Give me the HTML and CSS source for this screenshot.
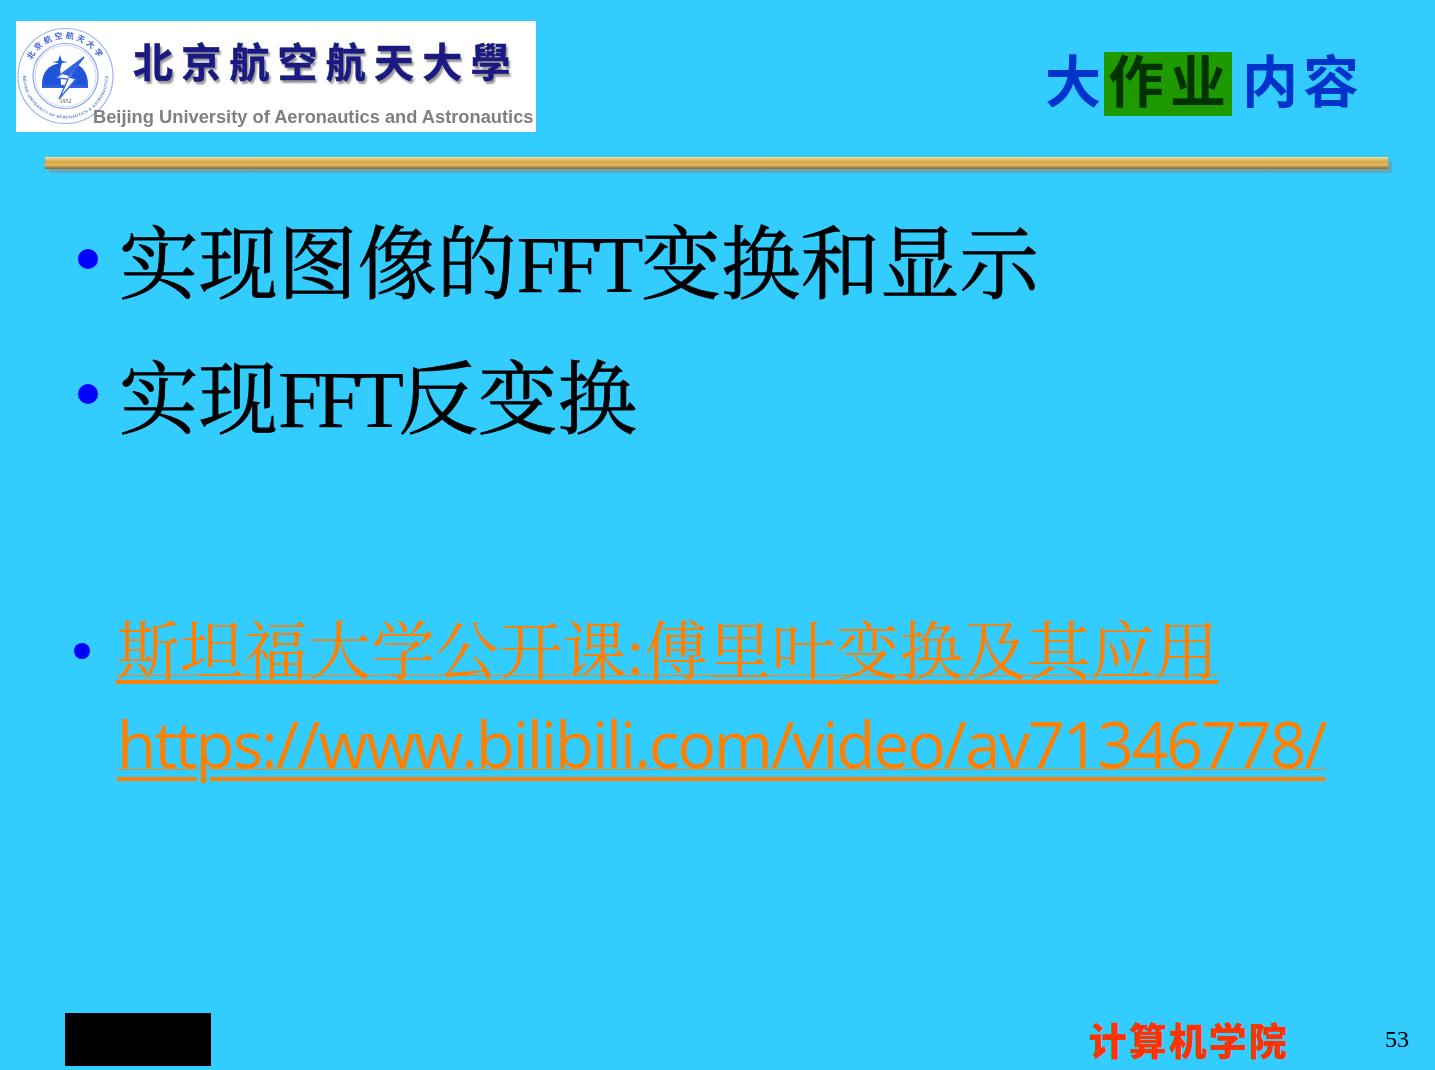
FILE: index.html
```html
<!DOCTYPE html>
<html lang="zh">
<head>
<meta charset="utf-8">
<title>大作业内容</title>
<link rel="stylesheet" href="styles.css">
</head>
<body>
<main class="slide">
  <header class="top">
    <div class="logo">
      <svg class="seal" viewBox="0 0 100 106" width="100" height="106">
        <defs>
          <path id="arcTop" d="M12 52 A 37.5 37.5 0 0 1 87 52"/>
          <path id="arcBottom" d="M7 52 A 42.5 42.5 0 0 0 92 52"/>
        </defs>
        <circle cx="49.5" cy="52" r="47.5" fill="#fff" stroke="#9db4f0" stroke-width="1.2"/>
        <circle cx="49.5" cy="52" r="32.5" fill="none" stroke="#8fa8ee" stroke-width="1.2"/>
        <circle cx="49.5" cy="52" r="30.5" fill="none" stroke="#c0cef5" stroke-width="0.8"/>
        <text class="seal-cn"><textPath href="#arcTop" startOffset="50%" text-anchor="middle">北京航空航天大学</textPath></text>
        <text class="seal-en"><textPath href="#arcBottom" startOffset="50%" text-anchor="middle">BEIJING UNIVERSITY OF AERONAUTICS &amp; ASTRONAUTICS</textPath></text>
        <path d="M26 60 C26 48 33 41 44 39 L45 61 L26 61 Z" fill="#1f55d8"/>
        <path d="M52 61 C54 52 58 46 62 41 C68 44 72 51 72 61 Z" fill="#1f55d8"/>
        <path d="M26 61 H72 V64 H26 Z" fill="#2f62dc"/>
        <path d="M44 31 L46 37 L52 38 L46 39 L44 45 L42 39 L36 38 L42 37 Z" fill="#1f55d8"/>
        <path d="M68 33 L40 54 L52 55 L43 75 L60 55 L53 53 Z" fill="#fff" stroke="#3a6ae0" stroke-width="1.4"/>
        <path d="M68 33 L46 50 L53 52 Z" fill="#2f62dc"/>
        <text class="seal-year" x="49.5" y="79" text-anchor="middle">1952</text>
      </svg>
      <div class="logo-text">
        <div class="logo-cn">北京航空航天大學</div>
        <div class="logo-en">Beijing University of Aeronautics and Astronautics</div>
      </div>
    </div>
    <h1 class="title"><span>大</span><span class="hl"><span>作</span><span>业</span></span><span class="t3">内</span><span class="t4">容</span></h1>
  </header>

  <div class="rule"></div>

  <section class="points">
    <p class="point"><i class="dot"></i><span>实现图像的<span class="lat">FFT</span>变换和显示</span></p>
    <p class="point second"><i class="dot"></i><span>实现<span class="lat">FFT</span>反变换</span></p>
  </section>

  <section class="links">
    <i class="dot small"></i>
    <a class="link" href="#"><span class="cn-link">斯坦福大学公开课:傅里叶变换及其应用</span><br><span class="url">https://www.bilibili.com/video/av71346778/</span></a>
  </section>

  <footer class="foot">
    <div class="black"></div>
    <div class="school">计算机学院</div>
    <div class="page">53</div>
  </footer>
</main>
</body>
</html>
```
FILE: styles.css
```css
* { box-sizing: border-box; }
html, body { margin: 0; padding: 0; }
body { background: #33ccff; font-family: "Liberation Serif", "Noto Serif CJK SC", "Noto Sans CJK SC", serif; }
.slide { width: 1435px; height: 1070px; overflow: hidden; display: flex; flex-direction: column; background: #33ccff; }

.top { display: flex; justify-content: space-between; align-items: flex-start; padding: 21px 0 0 16px; height: 157px; }
.logo { width: 520px; height: 111px; background: #fff; display: flex; filter: blur(0.5px); }
.seal { flex: none; margin: 3px 0 0 0; }
.seal-year { font: 6px "Liberation Serif", serif; fill: #555; }
.seal-cn { font: 700 8px "Noto Sans CJK SC", sans-serif; fill: #3a62d8; letter-spacing: 2.6px; }
.seal-en { font: 700 4px "Liberation Sans", sans-serif; fill: #5a7ee0; letter-spacing: 0.4px; }
.logo-text { margin-left: -23px; padding-top: 14px; }
.logo-cn { font: 700 40px/50px "Noto Sans CJK TC", sans-serif; letter-spacing: 8.2px; color: #1a1a80; padding-left: 40px; white-space: nowrap; text-shadow: 2px 3px 2px #999; -webkit-text-stroke: 0.5px #1a1a80; }
.logo-en { font: 700 18.3px/20px "Liberation Sans", sans-serif; color: #808080; white-space: nowrap; margin-top: 22px; }

.title { margin: 25px 0 0 0; width: 390px; height: 70px; display: flex; font: 700 56px/64px "Noto Sans CJK SC", sans-serif; color: #0033cc; }
.title > span:first-child { width: 59px; }
.hl { display: flex; width: 128px; height: 64px; margin-top: 6px; line-height: 52px; background: #1f9900; color: #003300; padding-left: 4px; gap: 6px; }
.t3 { margin-left: 10px; width: 58px; }
.t4 { width: 58px; padding-left: 3px; }

.rule { margin-left: 45px; width: 1343px; height: 12px; flex: none; background: linear-gradient(#fbe9a8 0, #e8c46a 15%, #d2a64a 45%, #e3bd66 65%, #a57f30 90%, #8f6c25 100%); box-shadow: 4px 4px 0 #5fa8c0; }

.points { padding: 0 0 0 78px; margin-top: 56px; font-size: 79.5px; line-height: 80px; color: #000; -webkit-text-stroke: 0.8px #000; }
.point { margin: 0; display: flex; align-items: center; white-space: nowrap; }
.point.second { margin-top: 55px; }
.lat { letter-spacing: -5px; padding-right: 3px; -webkit-text-stroke: 0.2px #000; }
.second .lat { letter-spacing: -5.5px; padding-right: 0; }
.dot { flex: none; display: block; width: 20px; height: 20px; border-radius: 50%; background: #0000ff; margin: 0 21px 12px 0; }

.links { display: flex; align-items: flex-start; padding-left: 74px; margin-top: 166px; }
.dot.small { width: 16px; height: 16px; margin: 37px 26px 0 0; }
.link { display: block; color: #ff8000; white-space: nowrap; }
.cn-link { font-size: 64px; line-height: 94px; letter-spacing: -0.2px; text-decoration: underline; text-decoration-thickness: 4px; text-underline-offset: 6px; }
.url { font: 64px/88px "Open Sans", sans-serif; letter-spacing: -2.1px; padding-left: 1px; text-decoration: underline; text-decoration-thickness: 4px; text-underline-offset: 9px; }

.foot { margin-top: auto; display: flex; align-items: center; height: 57px; padding: 0 0 4px 65px; }
.black { width: 146px; height: 53px; background: #000; }
.school { margin: 0 0 2px 878px; font: 900 38px/50px "Noto Sans CJK SC", sans-serif; color: #ff3300; letter-spacing: 2px; width: 296px; white-space: nowrap; }
.page { font-size: 24px; color: #000; }
```
